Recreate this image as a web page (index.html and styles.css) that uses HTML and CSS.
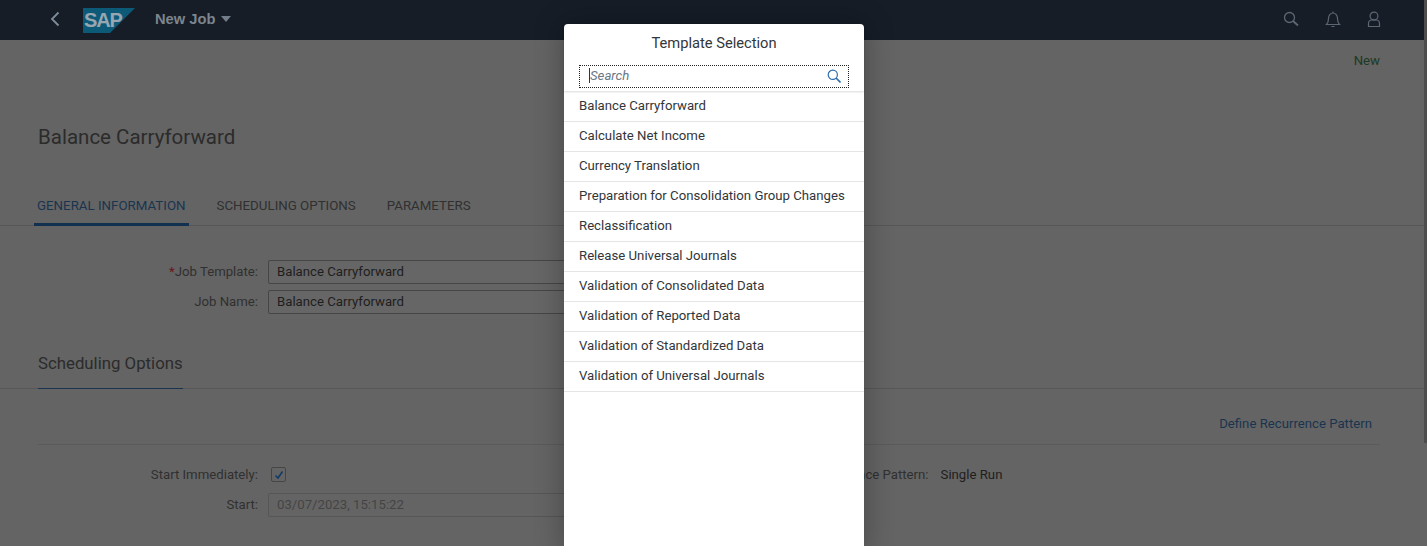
FILE: index.html
```html
<!DOCTYPE html>
<html lang="en">
<head>
<meta charset="utf-8">
<title>New Job</title>
<link rel="stylesheet" href="styles.css">
</head>
<body>
<header class="shell">
  <svg class="back" width="10" height="16" viewBox="0 0 10 16"><path d="M8.5 1.5 2 8l6.500 6.500" fill="none" stroke="#7f8c9b" stroke-width="1.800"/></svg>
  <svg class="logo" width="52" height="26" viewBox="0 0 52 26"><polygon points="0,0 52,0 27,25 0,25" fill="#0d5a78"/></svg>
  <span class="logo-text">SAP</span>
  <div class="title">New Job<span class="caret"></span></div>
  <div class="shell-icons">
    <svg width="16" height="16" viewBox="0 0 16 16" fill="none" stroke="#5c6773" stroke-width="1.300"><circle cx="6.500" cy="6.500" r="5"/><path d="M10 10l5 4.500" stroke-width="1.800"/></svg>
    <svg width="16" height="17" viewBox="0 0 16 17" fill="none" stroke="#5c6773" stroke-width="1.200"><path d="M1.500 13.500c1.500-1.500 2-3 2-6 0-3 2-5.500 4.500-5.500s4.500 2.500 4.500 5.500c0 3 .5 4.500 2 6zM8 .5V2M6.500 15.500h3"/></svg>
    <svg width="14" height="17" viewBox="0 0 14 17" fill="none" stroke="#5c6773" stroke-width="1.200"><circle cx="7" cy="5" r="3.900"/><path d="M1.500 15.500v-3c0-2 1.500-3.500 3-3.500h5c1.500 0 3 1.500 3 3.500v3z"/></svg>
  </div>
</header>
<main class="page">
  <div class="status"><span>New</span></div>
  <h1 class="job-title">Balance Carryforward</h1>
  <nav class="tabs">
    <span class="tab tab-active">GENERAL INFORMATION</span>
    <span class="tab">SCHEDULING OPTIONS</span>
    <span class="tab">PARAMETERS</span>
  </nav>
  <section class="form form-general">
    <div class="row">
      <label class="label"><span class="req">*</span>Job Template:</label>
      <div class="input">Balance Carryforward</div>
    </div>
    <div class="row">
      <label class="label">Job Name:</label>
      <div class="input">Balance Carryforward</div>
    </div>
  </section>
  <div class="section-head"><h2 class="section-title">Scheduling Options</h2></div>
  <div class="toolbar"><a class="link">Define Recurrence Pattern</a></div>
  <section class="columns">
    <div class="form">
      <div class="row">
        <label class="label">Start Immediately:</label>
        <span class="check"><svg width="10" height="10" viewBox="0 0 10 10"><path d="M1.500 5.500 4 8l4.500-6.500" fill="none" stroke="#0f3a66" stroke-width="1.500"/></svg></span>
      </div>
      <div class="row">
        <label class="label">Start:</label>
        <div class="input input-disabled">03/07/2023, 15:15:22</div>
      </div>
    </div>
    <div class="recurrence">
      <label class="label-plain">Recurrence Pattern:</label>
      <span class="value">Single Run</span>
    </div>
  </section>
</main>
<div class="scroll-thumb"></div>
<aside class="dialog">
  <div class="dialog-head">
    <div class="dialog-title">Template Selection</div>
    <div class="search">
      <span class="cursor"></span><span class="placeholder">Search</span>
      <svg width="14" height="14" viewBox="0 0 14 14" fill="none" stroke="#2b6cb0" stroke-width="1.200"><circle cx="5.800" cy="5.800" r="4.600"/><path d="M9 9l4.500 4.500" stroke-width="1.600"/></svg>
    </div>
  </div>
  <ul class="list">
    <li>Balance Carryforward</li>
    <li>Calculate Net Income</li>
    <li>Currency Translation</li>
    <li>Preparation for Consolidation Group Changes</li>
    <li>Reclassification</li>
    <li>Release Universal Journals</li>
    <li>Validation of Consolidated Data</li>
    <li>Validation of Reported Data</li>
    <li>Validation of Standardized Data</li>
    <li>Validation of Universal Journals</li>
  </ul>
</aside>
</body>
</html>
```
FILE: styles.css
```css
* { box-sizing: border-box; }
html, body { margin: 0; height: 546px; overflow: hidden; }
body {
  position: relative;
  background: #646464;
  color: #2f2f2f;
  font-family: Roboto, "Liberation Sans", sans-serif;
  font-size: 13.200px;
}
.shell {
  position: relative;
  height: 40px;
  background: #161d27;
  display: flex;
  align-items: center;
  padding-left: 50px;
}
.back { margin-right: 23px; margin-top: -2px; }
.logo { margin-top: 2px; }
.logo-text {
  position: absolute;
  left: 84px;
  top: 10px;
  color: #97a6b1;
  font: 700 20px/20px "Liberation Sans", sans-serif;
  letter-spacing: -1.200px;
}
.title {
  margin-left: 20px;
  margin-top: -3px;
  color: #7d858e;
  font-size: 14.700px;
  font-weight: 700;
  display: flex;
  align-items: center;
  font-family: "Liberation Sans", sans-serif;
}
.caret {
  margin-left: 6px;
  border-left: 5px solid transparent;
  border-right: 5px solid transparent;
  border-top: 6px solid #727d89;
}
.shell-icons {
  margin-left: auto;
  margin-top: -2px;
  padding-right: 46px;
  display: flex;
  align-items: center;
  gap: 26px;
}
.page { padding: 0 47px 0 38px; }
.status {
  display: flex;
  justify-content: flex-end;
  padding: 12px 0 0;
  color: #1a3a24;
  line-height: 17px;
}
.job-title {
  margin: 54px 0 0;
  font-size: 20.500px;
  font-weight: 400;
  line-height: 28px;
  color: #2b2b2b;
}
.tabs {
  margin: 36px -47px 0 -38px;
  padding-left: 34px;
  height: 39px;
  display: flex;
  gap: 24px;
  border-bottom: 1px solid #575757;
}
.tab {
  padding: 9px 3px 0;
  height: 39px;
  line-height: 20px;
  color: #303030;
  font-size: 13.300px;
}
.tab + .tab { margin-left: 1px; }
.tab-active {
  color: #1a344f;
  border-bottom: 3px solid #12304f;
}
.form { display: flex; flex-direction: column; gap: 7px; }
.form-general { padding-top: 34px; }
.row { display: flex; align-items: center; height: 23px; }
.label {
  flex: none;
  width: 230px;
  padding-right: 10px;
  text-align: right;
  color: #303030;
}
.req { color: #6a1616; }
.input {
  flex: none;
  width: 340px;
  height: 24px;
  padding-left: 8px;
  border: 1px solid #464646;
  border-radius: 2px;
  background: #666;
  line-height: 22px;
  color: #1e1e1e;
}
.section-head {
  margin: 38px -47px 0 -38px;
  padding-left: 38px;
  height: 38px;
  border-bottom: 1px solid #575757;
}
.section-title {
  display: inline-block;
  margin: 0;
  height: 38px;
  font-size: 16.800px;
  font-weight: 400;
  line-height: 25px;
  color: #2b2b2b;
  border-bottom: 1px solid #1a344f;
}
.toolbar {
  display: flex;
  justify-content: flex-end;
  align-items: center;
  height: 56px;
  padding: 13px 8px 0 0;
  border-bottom: 1px solid #5a5a5a;
}
.link { color: #1a344f; }
.columns { display: flex; padding-top: 18px; }
.columns .form { width: 527px; flex: none; gap: 7px; }
.check {
  flex: none;
  width: 15px;
  height: 15px;
  margin-left: 3px;
  border: 1px solid #464646;
  border-radius: 2px;
  display: flex;
  align-items: center;
  justify-content: center;
}
.input-disabled { border-color: #565656; color: #444; background: #646464; }
.recurrence {
  display: flex;
  height: 23px;
  margin-left: 248px;
  align-items: center;
  gap: 12px;
  white-space: nowrap;
}
.label-plain { color: #303030; }
.value { color: #1e1e1e; }
.scroll-thumb {
  position: absolute;
  right: 0;
  top: 0;
  width: 3px;
  height: 443px;
  background: #4d4d4d;
}
.dialog {
  position: absolute;
  left: 564px;
  top: 24px;
  width: 300px;
  height: 530px;
  background: #fff;
  border-radius: 4px 4px 0 0;
  box-shadow: 0 0 30px rgba(0, 0, 0, .3);
}
.dialog-head {
  height: 67px;
  padding: 8px 15px 0;
  box-shadow: 0 1px 2px rgba(0, 0, 0, .15);
  position: relative;
}
.dialog-title {
  text-align: center;
  font-size: 14.700px;
  line-height: 22px;
  color: #32363a;
}
.search {
  margin-top: 11px;
  height: 23px;
  padding: 0 7px 2px 9px;
  border: 1px dotted #222;
  display: flex;
  align-items: center;
  color: #6a7785;
  font-style: italic;
}
.cursor { width: 1px; height: 15px; background: #333; }
.placeholder { flex: 1; }
.list { list-style: none; margin: 0; padding: 0; }
.list li {
  height: 30px;
  padding-left: 15px;
  line-height: 28px;
  border-bottom: 1px solid #e5e5e5;
  color: #32363a;
}
.list li:first-child { height: 31px; line-height: 29px; }
```
